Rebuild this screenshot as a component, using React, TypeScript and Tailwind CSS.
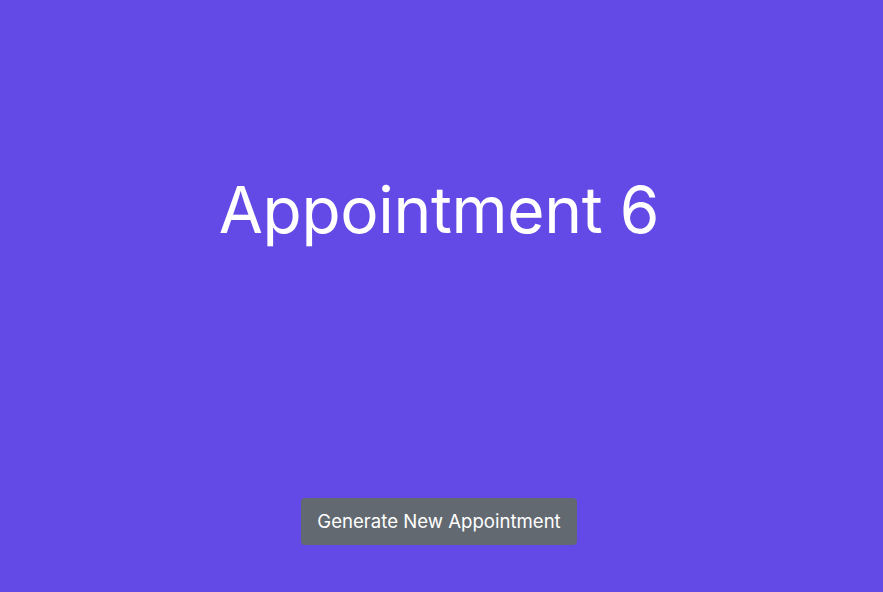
export default function App() {
  return (
    <div
      className="flex h-screen w-full flex-col items-center bg-[#634ae6] pr-[5px] text-white"
      style={{ fontFamily: "Inter, 'Noto Sans', sans-serif" }}
    >
      <div className="flex h-[420px] w-full items-center justify-center">
        <h1 className="text-[64px] font-normal leading-none tracking-[-0.35px]">Appointment 6</h1>
      </div>
      <div className="flex flex-1 items-end pb-[47px]">
        <button className="h-[47px] rounded-[4px] bg-[#626970] px-4 text-[18.6px] text-white">
          Generate New Appointment
        </button>
      </div>
    </div>
  );
}
